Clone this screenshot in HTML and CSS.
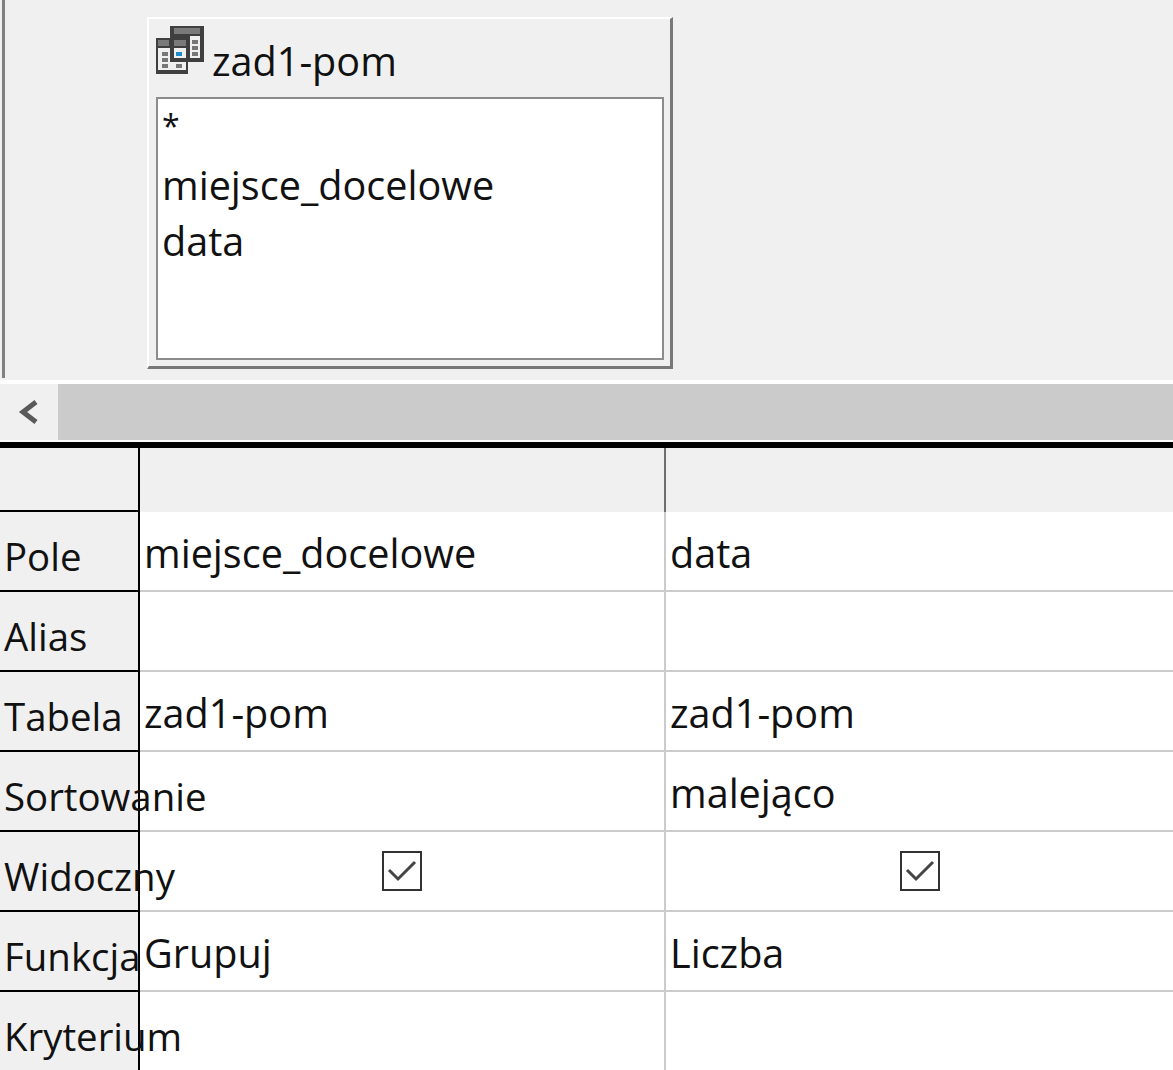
FILE: index.html
```html
<!DOCTYPE html>
<html lang="pl">
<head>
<meta charset="utf-8">
<title>Kwerenda</title>
<link rel="stylesheet" href="styles.css">
</head>
<body>
<div class="canvas">
  <div class="table-window">
    <div class="table-title">
      <svg class="table-icon" width="48" height="48" viewBox="0 0 48 48" aria-hidden="true">
        <rect x="14" y="0" width="34" height="36" fill="#3f3f3f"/>
        <rect x="18" y="2" width="26" height="6" fill="#7a7a7a"/>
        <rect x="34" y="10" width="10" height="22" fill="#f0f0f0"/>
        <rect x="36" y="14" width="6" height="4" fill="#777"/>
        <rect x="36" y="20" width="6" height="4" fill="#777"/>
        <rect x="36" y="26" width="6" height="4" fill="#777"/>
        <rect x="0" y="12" width="32" height="36" fill="#3f3f3f"/>
        <rect x="2" y="14" width="11" height="6" fill="#7a7a7a"/>
        <rect x="18" y="14" width="12" height="6" fill="#7a7a7a"/>
        <rect x="2" y="22" width="12" height="22" fill="#f0f0f0"/>
        <rect x="14" y="36" width="16" height="8" fill="#f0f0f0"/>
        <rect x="18" y="22" width="12" height="10" fill="#f0f0f0"/>
        <rect x="6" y="26" width="6" height="4" fill="#777"/>
        <rect x="6" y="32" width="6" height="4" fill="#777"/>
        <rect x="6" y="38" width="6" height="4" fill="#777"/>
        <rect x="20" y="26" width="6" height="4" fill="#1e8bcd"/>
        <rect x="20" y="38" width="6" height="4" fill="#777"/>
      </svg>
      <span class="table-name">zad1-pom</span>
    </div>
    <ul class="field-list">
      <li class="field-star">*</li>
      <li>miejsce_docelowe</li>
      <li>data</li>
    </ul>
  </div>
</div>
<div class="scrollbar">
  <div class="scroll-btn">
    <svg width="22" height="24" viewBox="0 0 22 24" aria-hidden="true">
      <path d="M19 2 L6 12 L19 22" fill="none" stroke="#595959" stroke-width="5"/>
    </svg>
  </div>
  <div class="scroll-track"></div>
</div>
<div class="grid">
  <div class="head corner"></div>
  <div class="col-head"></div>
  <div class="col-head last"></div>

  <div class="head">Pole</div>
  <div class="cell">miejsce_docelowe</div>
  <div class="cell last">data</div>

  <div class="head">Alias</div>
  <div class="cell"></div>
  <div class="cell last"></div>

  <div class="head">Tabela</div>
  <div class="cell">zad1-pom</div>
  <div class="cell last">zad1-pom</div>

  <div class="head">Sortowanie</div>
  <div class="cell"></div>
  <div class="cell last">malejąco</div>

  <div class="head">Widoczny</div>
  <div class="cell check-cell">
    <svg width="40" height="40" viewBox="0 0 40 40" aria-hidden="true"><rect x="1" y="1" width="38" height="38" fill="#fff" stroke="#333" stroke-width="2"/><path d="M7 19 L16 28 L33 11" fill="none" stroke="#444" stroke-width="3"/></svg>
  </div>
  <div class="cell last check-cell">
    <svg width="40" height="40" viewBox="0 0 40 40" aria-hidden="true"><rect x="1" y="1" width="38" height="38" fill="#fff" stroke="#333" stroke-width="2"/><path d="M7 19 L16 28 L33 11" fill="none" stroke="#444" stroke-width="3"/></svg>
  </div>

  <div class="head">Funkcja</div>
  <div class="cell">Grupuj</div>
  <div class="cell last">Liczba</div>

  <div class="head">Kryterium</div>
  <div class="cell"></div>
  <div class="cell last"></div>
</div>
</body>
</html>
```
FILE: styles.css
```css
html, body {
  margin: 0;
  padding: 0;
  height: 1070px;
  overflow: hidden;
  background: #fff;
  font-family: "Open Sans", "Noto Sans", sans-serif;
  color: #111;
}
.canvas {
  height: 380px;
  box-sizing: border-box;
  background: #f0f0f0;
  border-left: 2px solid #f0f0f0;
  padding: 17px 0 0 145px;
  position: relative;
}
.canvas::before {
  content: "";
  position: absolute;
  left: 0;
  top: 0;
  bottom: 2px;
  width: 3px;
  background: #808080;
}
.table-window {
  width: 526px;
  height: 352px;
  box-sizing: border-box;
  background: #f0f0f0;
  border-style: solid;
  border-width: 2px 3px 3px 2px;
  border-color: #fff #787878 #787878 #fff;
  padding: 7px 6px 6px 7px;
  display: flex;
  flex-direction: column;
}
.table-title {
  display: flex;
  align-items: flex-start;
  height: 71px;
  flex: none;
}
.table-name {
  font-size: 39.6px;
  line-height: 50px;
  margin: 10px 0 0 8px;
}
.field-list {
  list-style: none;
  margin: 0;
  padding: 0 0 0 4px;
  flex: 1;
  background: #fff;
  border: 2px solid #8c8c8c;
  font-size: 39.6px;
  line-height: 56px;
}
.field-star {
  height: 58px;
  line-height: 54px;
  font-size: 32px;
}
.scrollbar {
  display: flex;
  height: 56px;
  margin-top: 4px;
  background: #f0f0f0;
}
.scroll-btn {
  width: 58px;
  display: flex;
  align-items: center;
  justify-content: center;
  padding-right: 2px;
  box-sizing: border-box;
}
.scroll-track {
  flex: 1;
  background: #cbcbcb;
}
.grid {
  margin-top: 2px;
  border-top: 6px solid #000;
  display: grid;
  grid-template-columns: 140px 526px 1fr;
  grid-template-rows: 64px repeat(7, 80px);
  font-size: 39.6px;
}
.head {
  background: #f0f0f0;
  border-right: 2px solid #000;
  border-bottom: 2px solid #000;
  padding: 16px 0 0 4px;
  line-height: 56px;
  font-size: 38.4px;
  white-space: nowrap;
  box-sizing: border-box;
  min-width: 0;
}
.corner {
  padding: 0;
}
.col-head {
  background: #f0f0f0;
  border-right: 2px solid #6e6e6e;
}
.col-head.last,
.cell.last {
  border-right: 0;
}
.cell {
  border-right: 2px solid #cbcbcb;
  border-bottom: 2px solid #cbcbcb;
  padding: 13px 0 0 4px;
  line-height: 56px;
  box-sizing: border-box;
  white-space: nowrap;
}
.check-cell {
  padding: 19px 0 0 242px;
  line-height: 0;
}
.cell.last.check-cell {
  padding-left: 234px;
}
```
